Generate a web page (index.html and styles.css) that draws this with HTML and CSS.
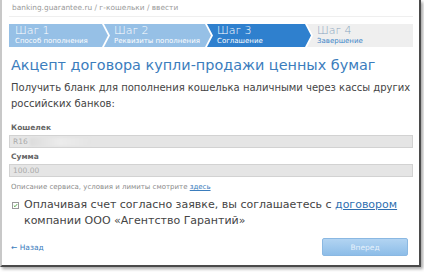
FILE: index.html
```html
<!DOCTYPE html>
<html lang="ru">
<head>
<meta charset="utf-8">
<link rel="stylesheet" href="styles.css">
</head>
<body>
<div class="window">
  <div class="crumbs">banking.guarantee.ru / г-кошельки / ввести</div>
  <div class="steps">
    <div class="step done first"><span class="num">Шаг 1</span><span class="cap">Способ пополнения</span></div>
    <div class="step done"><span class="num">Шаг 2</span><span class="cap">Реквизиты пополнения</span></div>
    <div class="step active"><span class="num">Шаг 3</span><span class="cap">Соглашение</span></div>
    <div class="step todo last"><span class="num">Шаг 4</span><span class="cap">Завершение</span></div>
  </div>
  <h1 class="title">Акцепт договора купли-продажи ценных бумаг</h1>
  <p class="lead">Получить бланк для пополнения кошелька наличными через кассы других российских банков:</p>
  <div class="field first-field">
    <div class="label">Кошелек</div>
    <div class="input">R16<span class="blur"></span></div>
  </div>
  <div class="field">
    <div class="label">Сумма</div>
    <div class="input">100.00</div>
  </div>
  <div class="note">Описание сервиса, условия и лимиты смотрите <a href="#">здесь</a></div>
  <div class="agree">
    <span class="check"><svg width="7" height="7" viewBox="0 0 7 7"><path d="M1.2 3.6 L2.8 5.2 L5.8 1.6" fill="none" stroke="#3a9a2a" stroke-width="1.2"/></svg></span>
    <span class="agree-text">Оплачивая счет согласно заявке, вы соглашаетесь с <a href="#">договором</a> компании ООО «Агентство Гарантий»</span>
  </div>
  <div class="actions">
    <a class="back" href="#">← Назад</a>
    <span class="btn">Вперед</span>
  </div>
</div>
</body>
</html>
```

FILE: styles.css
```css
html, body {
  margin: 0;
  padding: 0;
  background: #ffffff;
}
body {
  font-family: "DejaVu Sans", Verdana, sans-serif;
  width: 424px;
  height: 272px;
  overflow: hidden;
}
.window {
  box-sizing: border-box;
  width: 421px;
  height: 267px;
  border-left: 2px solid #c8c8c8;
  border-right: 2px solid #4a4a4a;
  border-bottom: 2px solid #4a4a4a;
  box-shadow: 2px 2px 3px rgba(0,0,0,0.35);
  padding: 0 6px 0 7px;
  display: flex;
  flex-direction: column;
}
.crumbs {
  font-size: 7.4px;
  color: #9a9a9a;
  padding: 4px 0 4px 3px;
  border-bottom: 1px solid #efefef;
  line-height: 8px;
}
.steps {
  display: flex;
  margin-top: 7px;
  height: 23px;
}
.step {
  box-sizing: border-box;
  height: 23px;
  display: flex;
  flex-direction: column;
  justify-content: center;
  padding-left: 10px;
  margin-left: -4px;
  clip-path: polygon(0 0, calc(100% - 6px) 0, 100% 50%, calc(100% - 6px) 100%, 0 100%, 6px 50%);
  color: #ffffff;
}
.step.first {
  margin-left: 0;
  padding-left: 6px;
  clip-path: polygon(0 0, calc(100% - 6px) 0, 100% 50%, calc(100% - 6px) 100%, 0 100%);
}
.step.last {
  clip-path: polygon(0 0, 100% 0, 100% 100%, 0 100%, 6px 50%);
}
.step:nth-child(1) { width: 99px; }
.step:nth-child(2) { width: 107px; }
.step:nth-child(3) { width: 104px; }
.step:nth-child(4) { flex: 1; }
.step.done { background: #96c0e6; }
.step.active { background: #2f80ce; }
.step.todo { background: #efefef; color: #3d85c8; }
.step.todo .num { color: #8aa6c0; }
.num {
  font-size: 11px;
  line-height: 12px;
  font-weight: 300;
}
.cap {
  font-size: 7px;
  line-height: 9px;
}
.title {
  margin: 8px 0 0 2px;
  font-size: 14.4px;
  font-weight: normal;
  color: #3b7dbd;
  line-height: 20px;
}
.lead {
  margin: 5px 0 0 2px;
  font-size: 10px;
  line-height: 16px;
  color: #444444;
}
.field {
  margin-top: 4px;
}
.field.first-field {
  margin-top: 11px;
}
.label {
  font-size: 7.5px;
  font-weight: bold;
  color: #666666;
  padding-left: 2px;
  line-height: 10px;
}
.input {
  margin-top: 2px;
  box-sizing: border-box;
  height: 13px;
  background: #e5e5e5;
  border: 1px solid #d2d2d2;
  font-size: 7.5px;
  color: #aaaaaa;
  line-height: 11px;
  padding-left: 3px;
  display: flex;
  align-items: center;
}
.blur {
  display: inline-block;
  width: 60px;
  height: 8px;
  margin-left: 2px;
  background: linear-gradient(90deg, #dcdcdc, #ececec 50%, #e5e5e5);
  filter: blur(1px);
}
.note {
  margin-top: 5px;
  font-size: 7px;
  color: #8a8a8a;
  padding-left: 2px;
  line-height: 10px;
}
.note a {
  color: #3b7dbd;
}
.agree {
  margin-top: 5px;
  display: flex;
  align-items: flex-start;
  padding-left: 3px;
}
.check {
  flex: none;
  box-sizing: border-box;
  width: 7px;
  height: 7px;
  border: 1px solid #9a9a9a;
  margin-top: 5px;
  margin-right: 5px;
  display: flex;
  align-items: center;
  justify-content: center;
  background: #fff;
}
.check svg { display: block; }
.agree-text {
  font-size: 11px;
  line-height: 15.5px;
  color: #444444;
}
.agree-text a {
  color: #2f6fb0;
}
.actions {
  margin-top: 10px;
  display: flex;
  justify-content: space-between;
  align-items: center;
  padding-right: 5px;
}
.back {
  font-size: 7.5px;
  color: #3b7dbd;
  text-decoration: none;
  padding-left: 2px;
}
.btn {
  width: 86px;
  height: 18px;
  box-sizing: border-box;
  border: 1px solid #8ab8e2;
  border-radius: 2px;
  background: linear-gradient(#b2d4f2, #8dbde8);
  color: #e6f1fb;
  font-size: 7.5px;
  display: flex;
  align-items: center;
  justify-content: center;
}
```
